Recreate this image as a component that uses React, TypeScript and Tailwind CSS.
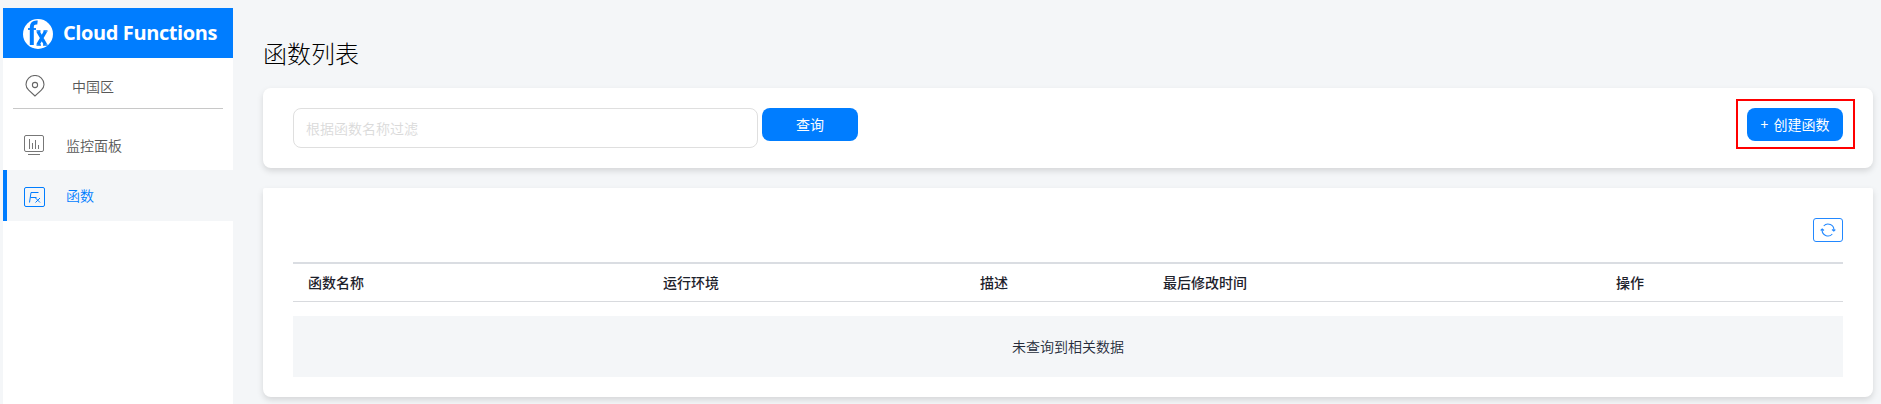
import React from "react";

const columns = [
  { label: "函数名称", width: "w-[355px]" },
  { label: "运行环境", width: "w-[317px]" },
  { label: "描述", width: "w-[183px]" },
  { label: "最后修改时间", width: "w-[453px]" },
  { label: "操作", width: "w-[227px]" },
];

function Logo() {
  return (
    <svg width="32" height="32" viewBox="0 0 32 32" fill="none" className="shrink-0">
      <circle cx="16" cy="16" r="15" fill="#fff" />
      <path d="M15.500 4.500C11.500 4 9.800 6 9.800 9V27" stroke="#007dff" strokeWidth="4" />
      <path d="M6 11h8" stroke="#007dff" strokeWidth="1.800" />
      <path d="M16 13.500l7.500 13M23.500 13.500l-7.500 13" stroke="#007dff" strokeWidth="3.400" />
      <path d="M14.500 13h4M21.500 13h4M14.500 27h4.500M21 27h4.500" stroke="#007dff" strokeWidth="1.600" />
    </svg>
  );
}

function PinIcon() {
  return (
    <svg width="20" height="22" viewBox="0 0 20 22" fill="none" stroke="#666" strokeWidth="1.100" className="shrink-0">
      <path d="M10 21L3.700 15.200C1.900 13.500 1 11.600 1 9.500a9 9 0 0 1 18 0c0 2.100-.9 4-2.700 5.700z" />
      <circle cx="10" cy="10" r="2.600" />
    </svg>
  );
}

function MonitorIcon() {
  return (
    <svg width="20" height="20" viewBox="0 0 20 20" fill="none" stroke="#777" className="shrink-0">
      <rect x=".5" y=".5" width="19" height="16" rx="1.500" />
      <path d="M5.500 4v10M8.500 8v6M11.500 5v9M14.500 10v4M4 19.500h12" />
    </svg>
  );
}

function FxIcon() {
  return (
    <svg width="21" height="20" viewBox="0 0 21 20" fill="none" stroke="#007dff" className="shrink-0">
      <rect x=".5" y=".5" width="20" height="19" rx="1.500" />
      <path d="M5.500 15.500L7 5.500H14.500M6.500 10.500h6M11.500 11l4.500 4.500M16 11l-4.500 4.500" />
    </svg>
  );
}

function RefreshIcon() {
  return (
    <svg width="16" height="14" viewBox="0 0 16 14" fill="none" stroke="#2288ff" strokeWidth="1.100" className="shrink-0">
      <path d="M3.700 3A5.800 5.800 0 0 1 13.800 7.500M12.300 11A5.800 5.800 0 0 1 2.200 6.500" />
      <path d="M.7 7.500l1.500-1.500 1.800 1.500M12 6.500l1.800 1.500 1.500-1.500" />
    </svg>
  );
}

export default function App() {
  return (
    <div className="flex h-[404px] w-full overflow-hidden bg-[#f4f6f8] pt-2 pl-[3px] font-['Noto_Sans_CJK_SC',sans-serif] text-sm leading-5 font-[350] text-[#252b3a]">
      <aside className="h-full w-[230px] shrink-0 bg-white text-[#575757]">
        <div className="flex h-[50px] items-center bg-[#007dff] pt-[2px] pl-[19px] text-white">
          <Logo />
          <span className="ml-[9px] pb-[2px] font-['Open_Sans',sans-serif] text-[20px] font-bold tracking-[-0.4px] whitespace-nowrap">Cloud Functions</span>
        </div>
        <div className="mx-[10px] flex h-[51px] items-center border-b border-[#c8c8c8] pt-[6px] pl-3">
          <PinIcon />
          <span className="ml-[27px]">中国区</span>
        </div>
        <div className="mt-[10px] flex h-[51px] items-center pt-px pl-[21px]">
          <MonitorIcon />
          <span className="ml-[22px] pb-px">监控面板</span>
        </div>
        <div className="flex h-[51px] items-center border-l-4 border-[#007dff] bg-[#f4f6f8] pt-[2px] pl-[17px] text-[#007dff]">
          <FxIcon />
          <span className="ml-[21px] pb-[3px]">函数</span>
        </div>
      </aside>

      <main className="ml-[30px] w-[1610px] shrink-0">
        <h1 className="flex h-20 items-center pt-[10px] text-2xl font-light text-black">函数列表</h1>

        <section className="flex h-20 items-start rounded-lg bg-white px-[30px] pt-5 shadow-[0_3px_6px_rgba(0,0,0,0.13)]">
          <input
            className="h-10 w-[465px] rounded-lg border border-[#dfdfdf] px-3 placeholder:text-[#dadada]"
            placeholder="根据函数名称过滤"
          />
          <button className="ml-1 h-[33px] w-24 rounded-lg bg-[#007dff] pb-[2px] font-normal text-white">查询</button>
          <div className="-mt-[9px] -mr-3 ml-auto h-[50px] w-[119px] border-2 border-[#ff0000] pt-[7px] pl-[9px]">
            <button className="h-[33px] w-24 rounded-lg bg-[#007dff] pb-[2px] font-normal [word-spacing:2px] whitespace-nowrap text-white">+ 创建函数</button>
          </div>
        </section>

        <section className="mt-5 h-[209px] rounded-t-xs rounded-b-lg bg-white px-[30px] pt-[30px] shadow-[0_3px_6px_rgba(0,0,0,0.13)]">
          <button className="ml-auto flex h-6 w-[30px] items-center justify-center rounded-[3px] border border-[#2288ff]">
            <RefreshIcon />
          </button>
          <div className="mt-5 flex h-10 items-center border-t-2 border-b border-t-[#dadde2] border-b-[#d8dade] pb-[2px] pl-[15px] font-medium text-[#1d212b]">
            {columns.map((c) => (
              <div key={c.label} className={c.width}>{c.label}</div>
            ))}
          </div>
          <div className="mt-[14px] flex h-[61px] items-center justify-center bg-[#f4f6f8] pb-[2px]">未查询到相关数据</div>
        </section>
      </main>
    </div>
  );
}
